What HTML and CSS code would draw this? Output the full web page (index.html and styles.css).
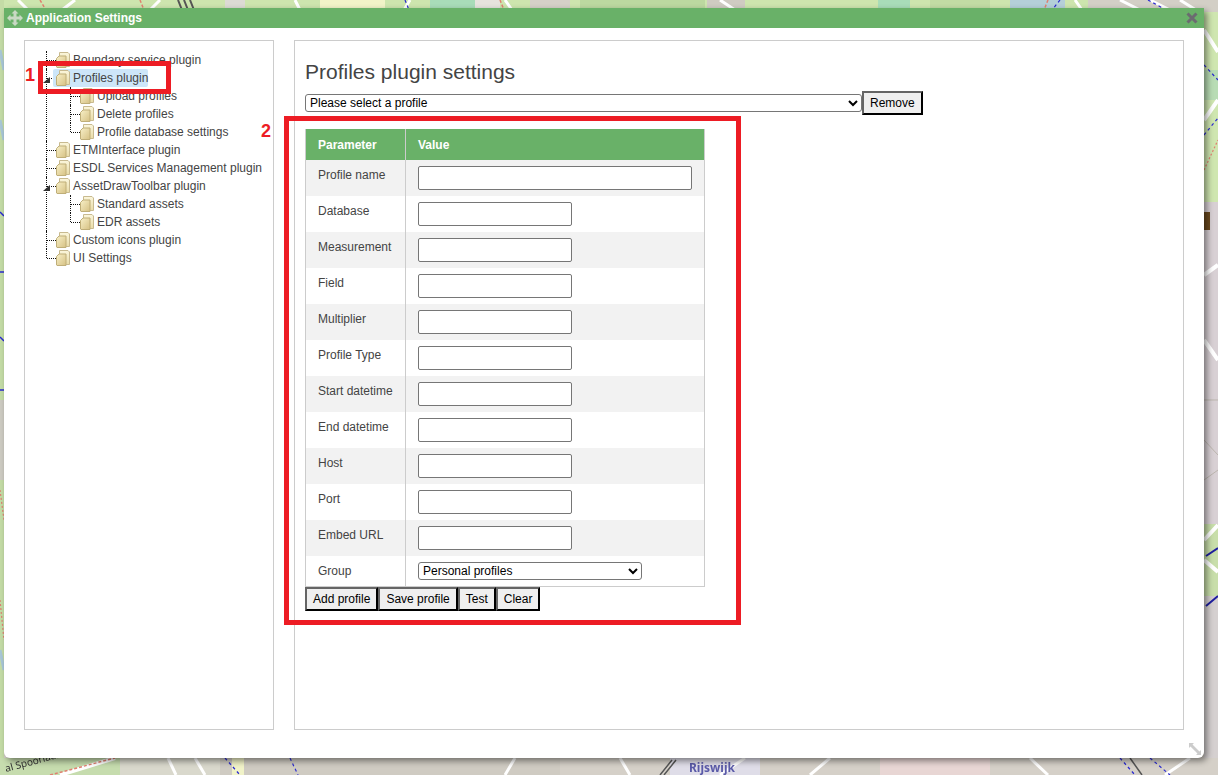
FILE: index.html
```html
<!DOCTYPE html>
<html lang="en">
<head>
  <meta charset="UTF-8">
  <title>Application Settings</title>
  <link rel="stylesheet" href="styles.css">
</head>
<body>

  <!-- map behind the dialog, only the edges show -->
  <svg class="map" width="1218" height="775" viewBox="0 0 1218 775">
    <rect width="1218" height="775" fill="#d5d0c8"/>

    <!-- top edge -->
    <rect x="0" y="0" width="1218" height="10" fill="#cde5ae"/>
    <rect x="225" y="0" width="20" height="10" fill="#dcdad4"/>
    <rect x="320" y="0" width="65" height="10" fill="#f1f3c8"/>
    <rect x="430" y="0" width="45" height="10" fill="#a8dcb8"/>
    <rect x="475" y="0" width="25" height="10" fill="#e6e3dd"/>
    <rect x="530" y="0" width="40" height="10" fill="#d5d0c8"/>
    <rect x="580" y="0" width="125" height="10" fill="#bcd8a0"/>
    <rect x="707" y="0" width="38" height="10" fill="#cfcbc2"/>
    <rect x="878" y="0" width="32" height="10" fill="#a8dcb8"/>
    <rect x="930" y="0" width="60" height="10" fill="#c2dba4"/>
    <rect x="1010" y="0" width="55" height="10" fill="#b4cfd8"/>
    <rect x="1088" y="0" width="130" height="10" fill="#d3cfc6"/>
    <path d="M18 0L28 10M75 0L62 10M160 0L150 10M295 0L300 10M410 0L404 10M505 0L512 10M720 0L735 10M1075 0L1082 10M1120 0L1140 10M1150 0L1170 10M1180 0L1196 10" stroke="#fff" stroke-width="3"/>
    <path d="M178 0L182 10M184 0L188 10M190 0L194 10" stroke="#555" stroke-width="2"/>
    <path d="M40 0L46 10M140 0L144 10M500 0L504 10M1048 0L1044 10" stroke="#e08070" stroke-width="1.5" stroke-dasharray="3 2"/>
    <path d="M405 0L409 10M1060 0L1052 10M1148 0L1170 12" stroke="#2a2ad0" stroke-width="1.200" stroke-dasharray="3 3"/>

    <!-- left edge -->
    <rect x="0" y="0" width="4" height="775" fill="#c4dca6"/>
    <rect x="0" y="400" width="4" height="80" fill="#cdcbc2"/>
    <path d="M0 212L4 216M0 272h4M0 337L4 341M0 390h4" stroke="#2a2ad0" stroke-width="1.500"/>
    <path d="M0 50L4 70M0 120L4 140M0 650L4 670" stroke="#a9c7d8" stroke-width="3"/>
    <path d="M0 490L4 520M0 600L4 640" stroke="#e08070" stroke-width="1.200" stroke-dasharray="2 2"/>

    <!-- right edge -->
    <rect x="1204" y="0" width="14" height="12" fill="#d3cfc6"/>
    <rect x="1204" y="12" width="14" height="190" fill="#cfe6b0"/>
    <rect x="1204" y="202" width="14" height="322" fill="#d8d0d4"/>
    <rect x="1204" y="524" width="14" height="72" fill="#c8deaa"/>
    <rect x="1204" y="596" width="14" height="179" fill="#d5d0d0"/>
    <rect x="1204" y="70" width="14" height="30" fill="#b8dcb4"/>
    <path d="M1204 30L1218 52M1204 120L1218 100M1204 340L1218 360M1204 275L1218 265M1204 540L1218 525M1204 560L1218 572" stroke="#fff" stroke-width="4"/>
    <path d="M1204 65L1218 80M1204 135L1218 118" stroke="#2a2ad0" stroke-width="1.200" stroke-dasharray="3 3"/>
    <path d="M1204 170L1218 140" stroke="#e08070" stroke-width="1.200" stroke-dasharray="2 2"/>
    <path d="M1206 556L1218 548M1206 606L1218 596" stroke="#1e1ea0" stroke-width="2"/>
    <rect x="1204" y="212" width="6" height="18" fill="#6b4a1f"/>
    <path d="M1204 400H1218M1204 440L1218 455M1204 480L1218 470" stroke="#bbb5ad" stroke-width="1"/>

    <!-- bottom edge -->
    <rect x="0" y="758" width="120" height="17" fill="#c6dcae"/>
    <rect x="120" y="758" width="100" height="17" fill="#d9d8cc"/>
    <rect x="220" y="758" width="340" height="17" fill="#cfcbc2"/>
    <rect x="232" y="758" width="12" height="17" fill="#f1f3c8"/>
    <rect x="560" y="758" width="658" height="17" fill="#d5d0c8"/>
    <rect x="880" y="758" width="110" height="17" fill="#e8d6d4"/>
    <rect x="670" y="758" width="90" height="17" fill="#dfdde8"/>
    <path d="M60 775L115 758" stroke="#fff" stroke-width="4"/>
    <path d="M50 775L115 758" stroke="#e08070" stroke-width="1.500" stroke-dasharray="3 2"/>
    <path d="M168 758L176 775M195 758L205 775M505 775L515 758M620 758L630 775M720 775L745 758M810 775L830 758M1030 758L1048 775M1165 775L1190 758" stroke="#fff" stroke-width="3"/>
    <path d="M225 758L240 775M290 758L298 775M1120 758L1135 775M1150 758L1170 775" stroke="#2a2ad0" stroke-width="1.200" stroke-dasharray="3 3"/>
    <path d="M660 775L672 760M664 775L676 760M1130 758L1142 775" stroke="#555" stroke-width="1.500"/>
    <text class="map-label" x="689" y="772">Rijswijk</text>
    <text class="map-street" transform="translate(6 772) rotate(-15)">al Spoorlaan</text>
  </svg>

  <svg class="icon-defs" width="0" height="0">
    <defs>
      <linearGradient id="folder-back" x1="0" y1="0" x2="0" y2="1">
        <stop offset="0" stop-color="#fbf6dc"/>
        <stop offset="1" stop-color="#e9dca8"/>
      </linearGradient>
      <linearGradient id="folder-front" x1="0" y1="0" x2="1" y2="1">
        <stop offset="0" stop-color="#f8f0c8"/>
        <stop offset="1" stop-color="#d6c184"/>
      </linearGradient>
    </defs>
    <symbol id="folder" viewBox="0 0 14 16">
      <path d="M3.500 .5H12l1.500 1.500V14.500H3.500z" fill="url(#folder-back)" stroke="#c8ba90"/>
      <path d="M.5 6.500L3 4H10V15.500H1L.5 15z" fill="url(#folder-front)" stroke="#bfae78"/>
    </symbol>
  </svg>

  <div class="dialog">
    <div class="titlebar">
      <svg class="move-icon" width="16" height="16" viewBox="0 0 16 16">
        <path d="M8 0l3.500 3.500H9.500v3h3v-2L16 8l-3.500 3.500v-2h-3v3h2L8 16l-3.500-3.500h2v-3h-3v2L0 8l3.500-3.500v2h3v-3h-2z"/>
      </svg>
      <span class="title-text">Application Settings</span>
      <svg class="close-icon" width="12" height="12" viewBox="0 0 12 12">
        <path d="M1.500 1.500l9 9M10.500 1.500l-9 9"/>
      </svg>
    </div>

    <div class="dialog-body">
      <div class="panel tree-panel">
        <ul class="tree">
          <li><svg class="folder"><use href="#folder"/></svg>Boundary service plugin</li>
          <li class="open">
            <span class="arrow"></span>
            <span class="selected"><svg class="folder"><use href="#folder"/></svg>Profiles plugin</span>
            <ul>
              <li><svg class="folder"><use href="#folder"/></svg>Upload profiles</li>
              <li><svg class="folder"><use href="#folder"/></svg>Delete profiles</li>
              <li><svg class="folder"><use href="#folder"/></svg>Profile database settings</li>
            </ul>
          </li>
          <li><svg class="folder"><use href="#folder"/></svg>ETMInterface plugin</li>
          <li><svg class="folder"><use href="#folder"/></svg>ESDL Services Management plugin</li>
          <li class="open">
            <span class="arrow"></span>
            <svg class="folder"><use href="#folder"/></svg>AssetDrawToolbar plugin
            <ul>
              <li><svg class="folder"><use href="#folder"/></svg>Standard assets</li>
              <li><svg class="folder"><use href="#folder"/></svg>EDR assets</li>
            </ul>
          </li>
          <li><svg class="folder"><use href="#folder"/></svg>Custom icons plugin</li>
          <li><svg class="folder"><use href="#folder"/></svg>UI Settings</li>
        </ul>
      </div>

      <div class="panel settings-panel">
        <h1>Profiles plugin settings</h1>
        <div class="profile-picker">
          <select class="profile-select">
            <option>Please select a profile</option>
          </select>
          <button>Remove</button>
        </div>

        <table class="params">
          <thead>
            <tr><th class="col-param">Parameter</th><th>Value</th></tr>
          </thead>
          <tbody>
            <tr><td class="col-param">Profile name</td><td><input class="wide" type="text"></td></tr>
            <tr><td class="col-param">Database</td><td><input type="text"></td></tr>
            <tr><td class="col-param">Measurement</td><td><input type="text"></td></tr>
            <tr><td class="col-param">Field</td><td><input type="text"></td></tr>
            <tr><td class="col-param">Multiplier</td><td><input type="text"></td></tr>
            <tr><td class="col-param">Profile Type</td><td><input type="text"></td></tr>
            <tr><td class="col-param">Start datetime</td><td><input type="text"></td></tr>
            <tr><td class="col-param">End datetime</td><td><input type="text"></td></tr>
            <tr><td class="col-param">Host</td><td><input type="text"></td></tr>
            <tr><td class="col-param">Port</td><td><input type="text"></td></tr>
            <tr><td class="col-param">Embed URL</td><td><input type="text"></td></tr>
            <tr class="group-row">
              <td class="col-param">Group</td>
              <td><select class="group-select"><option>Personal profiles</option></select></td>
            </tr>
          </tbody>
        </table>

        <div class="actions">
          <button>Add profile</button>
          <button>Save profile</button>
          <button>Test</button>
          <button>Clear</button>
        </div>
      </div>
    </div>

    <svg class="resize-icon" width="14" height="14" viewBox="0 0 14 14">
      <path d="M1 1h5L4.500 2.500l7 7L13 8v5H8l1.500-1.500-7-7L1 6z"/>
    </svg>
  </div>

  <!-- red callouts drawn on the screenshot -->
  <div class="callout callout-one"></div>
  <div class="callout callout-two"></div>
  <span class="callout-num num-one">1</span>
  <span class="callout-num num-two">2</span>

</body>
</html>
```

FILE: styles.css
```css
html, body {
  margin: 0;
  height: 100%;
  overflow: hidden;
}
body {
  font-family: "Liberation Sans", Arial, sans-serif;
  font-size: 12px;
  color: #444;
  position: relative;
}
.map {
  position: absolute;
  left: 0;
  top: 0;
  filter: blur(0.4px);
}
.map-label {
  font-family: "Noto Sans", sans-serif;
  font-size: 12px;
  font-weight: bold;
  fill: #5a5aa8;
}
.map-street {
  font-family: "Noto Sans", sans-serif;
  font-size: 10px;
  fill: #333;
}
.icon-defs {
  position: absolute;
}

.dialog {
  position: absolute;
  left: 4px;
  top: 8px;
  width: 1200px;
  height: 750px;
  background: white;
  border-radius: 3px 3px 6px 6px;
  box-shadow: 3px 3px 6px rgba(0, 0, 0, 0.45);
  display: flex;
  flex-direction: column;
}
.titlebar {
  height: 20px;
  background: #69b168;
  display: flex;
  align-items: center;
  padding: 0 6px 0 3px;
  flex: none;
}
.move-icon {
  fill: #c9d9c4;
  margin-right: 3px;
}
.title-text {
  color: white;
  font-weight: bold;
  flex: 1;
}
.close-icon {
  stroke: #6b6b70;
  stroke-width: 3;
  fill: none;
}
.dialog-body {
  display: flex;
  gap: 20px;
  padding: 12px 20px 0;
  height: 690px;
}
.panel {
  border: 1px solid #ccc;
  height: 690px;
  box-sizing: border-box;
}
.tree-panel {
  width: 250px;
  padding: 10px 0 0 21px;
  flex: none;
}
.settings-panel {
  flex: 1;
  padding: 0 10px;
}

/* tree */
.tree, .tree ul {
  list-style: none;
  margin: 0;
  padding: 0;
}
.tree li {
  position: relative;
  padding-left: 10px;
  line-height: 18px;
  white-space: nowrap;
}
.tree > li > ul {
  padding-left: 14px;
}
.tree li::before {
  content: "";
  position: absolute;
  left: 0;
  top: 0;
  height: 100%;
  border-left: 1px dotted #111;
}
.tree li:last-child::before {
  height: 9px;
}
.tree li::after {
  content: "";
  position: absolute;
  left: 1px;
  top: 9px;
  width: 9px;
  border-top: 1px dotted #111;
}
.folder {
  width: 14px;
  height: 16px;
  vertical-align: top;
  margin: 1px 3px 0 0;
}
.selected {
  display: inline-block;
  height: 18px;
  background: #cde6f9;
  border-radius: 2px;
  margin-left: -3px;
  padding-left: 3px;
  position: relative;
  z-index: 1;
}
.open > .arrow {
  position: absolute;
  left: -3px;
  top: 8px;
  width: 0;
  height: 0;
  border-bottom: 6px solid #333;
  border-left: 7px solid transparent;
  z-index: 2;
}

/* settings */
h1 {
  font-size: 21px;
  font-weight: normal;
  color: #444;
  margin: 19px 0 8px;
  line-height: 23px;
}
.profile-picker {
  display: flex;
  align-items: center;
  height: 24px;
}
select, input, button {
  font-family: "Liberation Sans", Arial, sans-serif;
  font-size: 12px;
  box-sizing: border-box;
}
select {
  height: 18px;
  background: white;
  border: 1px solid #767676;
  border-radius: 3px;
  color: #000;
}
.profile-select {
  width: 557px;
}
button {
  height: 24px;
  padding: 0 6px;
  background: #efefef;
  border: 2px outset #111;
  color: #000;
}
.params {
  border-collapse: collapse;
  table-layout: fixed;
  width: 400px;
  margin-top: 14px;
  border: 1px solid #ccc;
  border-top: none;
}
th {
  background: #69b168;
  color: white;
  text-align: left;
  padding: 0 12px;
  height: 31px;
  border-left: 1px solid #ccc;
}
td {
  padding: 6px 12px;
  height: 36px;
  box-sizing: border-box;
  vertical-align: top;
  color: #444;
}
td.col-param {
  border-right: 1px solid #ccc;
  padding-top: 8px;
  line-height: 14px;
}
.col-param {
  width: 100px;
  box-sizing: border-box;
  white-space: nowrap;
}
tbody tr:nth-child(odd) {
  background: #f2f2f2;
}
input {
  display: block;
  width: 154px;
  height: 24px;
  border: 1px solid #767676;
  border-radius: 2px;
  background: white;
}
input.wide {
  width: 274px;
}
.group-row td {
  height: 30px;
  padding-bottom: 0;
}
.group-select {
  display: block;
  width: 224px;
}
.actions {
  display: flex;
}

.resize-icon {
  position: absolute;
  right: 2px;
  bottom: 2px;
  fill: #ccc;
}

/* annotations */
.callout {
  position: absolute;
  border: 5px solid #ed1c24;
  box-sizing: border-box;
}
.callout-one {
  left: 38px;
  top: 61px;
  width: 133px;
  height: 33px;
}
.callout-two {
  left: 284px;
  top: 116px;
  width: 457px;
  height: 509px;
}
.callout-num {
  position: absolute;
  color: #ed1c24;
  font-size: 18px;
  font-weight: bold;
  line-height: 20px;
}
.num-one {
  left: 25px;
  top: 65px;
}
.num-two {
  left: 261px;
  top: 121px;
}
```
